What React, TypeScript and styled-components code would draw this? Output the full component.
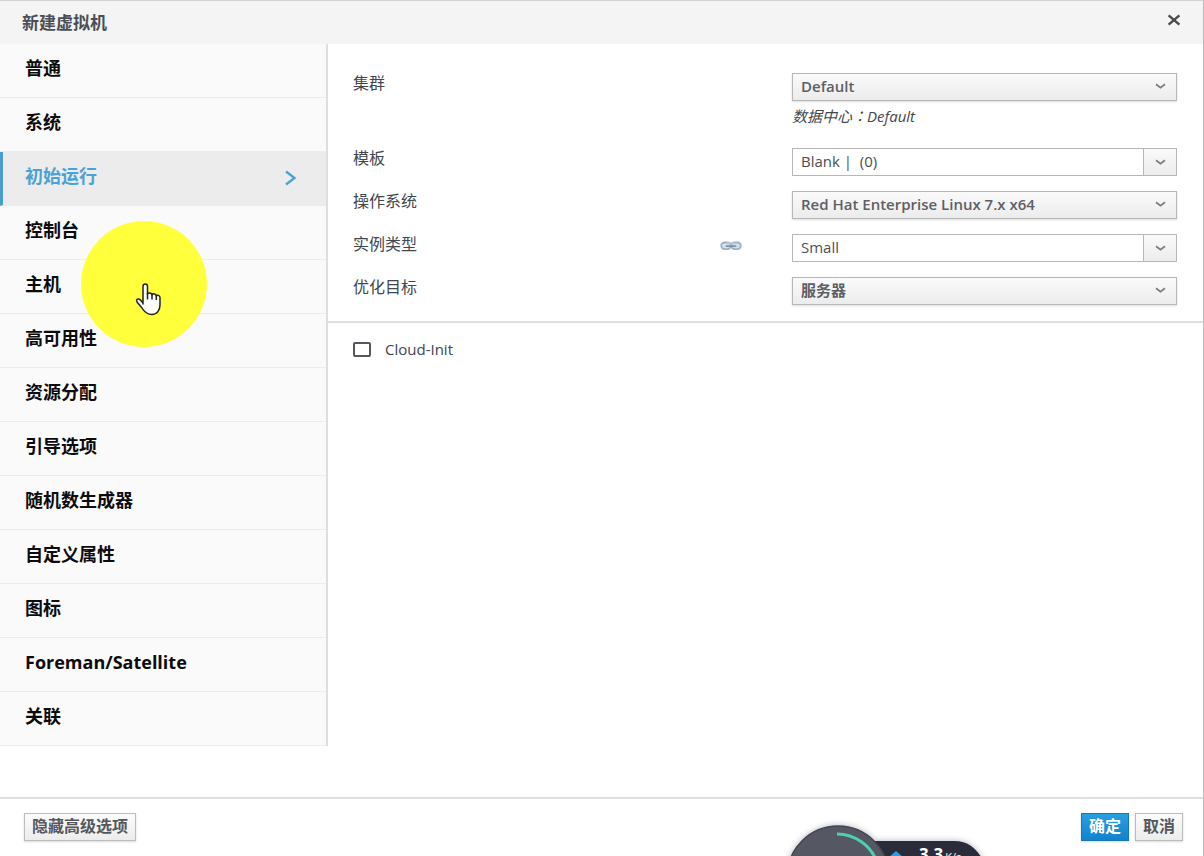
import React, { useState } from "react";
import styled, { createGlobalStyle, css } from "styled-components";

const GlobalStyle = createGlobalStyle`
  *, *::before, *::after { box-sizing: border-box; }
  body {
    margin: 0;
    background: #fff;
    color: #42464d;
    font-family: "Open Sans", "Noto Sans CJK SC", sans-serif;
    font-size: 15px;
  }
  button, select, input { font: inherit; color: inherit; margin: 0; }
`;

const Dialog = styled.main`
  position: relative;
  display: flex;
  flex-direction: column;
  height: 100vh;
  overflow: hidden;
  border-top: 1px solid #d2d2d2;
  border-right: 1px solid #b9b9b9;
`;

const Header = styled.header`
  display: flex;
  align-items: center;
  justify-content: space-between;
  flex: none;
  height: 43px;
  padding: 0 21px 0 22px;
  background: #f4f4f4;
`;

const Title = styled.h1`
  margin: 0;
  font-size: 17px;
  line-height: 24px;
  font-weight: 700;
  color: #4a4e56;
`;

const CloseButton = styled.button`
  display: flex;
  padding: 0;
  margin-bottom: 6px;
  border: 0;
  background: none;
`;

const Body = styled.div`
  display: flex;
  flex: 1;
  min-height: 0;
`;

const Sidebar = styled.nav`
  flex: 0 0 328px;
  align-self: flex-start;
  border-right: 2px solid #dedede;
  background: #fafafa;
`;

const Tab = styled.button<{ $active: boolean }>`
  display: flex;
  align-items: center;
  justify-content: space-between;
  width: 100%;
  height: 54px;
  padding: 0 28px 6px 25px;
  border: 0;
  border-bottom: 1px solid #ececec;
  background: none;
  font-size: 18px;
  line-height: 24px;
  font-weight: 700;
  color: #0c0c0e;
  text-align: left;
  ${(p) =>
    p.$active &&
    css`
      padding-left: 22px;
      border-left: 3px solid #4a9ccb;
      background: #ececec;
      color: #4ba3d3;
    `}
  svg { margin-top: 5px; }
`;

const Content = styled.section`
  flex: 1;
  min-width: 0;
`;

const Fields = styled.div`
  display: flex;
  flex-direction: column;
  gap: 15px;
  padding: 29px 26px 16px 25px;
  border-bottom: 2px solid #e0e0e0;
`;

const Field = styled.div`
  display: grid;
  grid-template-columns: minmax(0, 1fr) 48px 385px;
  align-items: start;
`;

const FieldLabel = styled.label`
  font-size: 16px;
  line-height: 20px;
`;

const LinkSlot = styled.span`
  display: flex;
  margin: 7px 0 0 -24px;
`;

const Control = styled.div`
  position: relative;
  display: flex;
  height: 28px;
`;

const face = css`
  background: linear-gradient(#fafafa, #ececec);
`;

const Select = styled.select`
  appearance: none;
  width: 100%;
  padding: 0 40px 2px 8px;
  border: 1px solid #b7b7b7;
  border-radius: 0;
  box-shadow: 0 1px 2px #dcdcdc;
  ${face}
  font-size: 15px;
  font-weight: 600;
  color: #5c5f65;
`;

const SelectArrow = styled.span`
  position: absolute;
  top: 10px;
  right: 11px;
  display: flex;
  pointer-events: none;
`;

const ComboInput = styled.input`
  flex: 1;
  min-width: 0;
  padding: 0 8px 2px;
  border: 1px solid #b7b7b7;
  font-size: 15px;
  color: #4c4f55;
  white-space: pre;
`;

const ComboButton = styled.button`
  display: flex;
  align-items: center;
  justify-content: center;
  width: 33px;
  padding: 0;
  border: 1px solid #b7b7b7;
  border-left: 0;
  ${face}
`;

const Note = styled.p`
  margin: 5px 0 7px;
  font-size: 15px;
  line-height: 20px;
  font-style: italic;
`;

const Colon = styled.span`
  font-family: "Noto Sans CJK TC", sans-serif;
`;

const CheckLabel = styled.label`
  display: flex;
  align-items: center;
  gap: 14px;
  padding: 16px 25px;
  line-height: 20px;
`;

const Checkbox = styled.input`
  appearance: none;
  width: 18px;
  height: 15px;
  border: 2px solid #55585c;
  border-radius: 2px;
  background: #fff;
  &:checked { background: #55585c; }
`;

const Footer = styled.footer`
  display: flex;
  align-items: flex-start;
  gap: 6px;
  flex: none;
  height: 59px;
  padding: 14px 20px 0 24px;
  border-top: 2px solid #e0e0e0;
`;

const Button = styled.button<{ $primary?: boolean; $first?: boolean }>`
  height: 28px;
  padding: 0 7px 2px;
  border: 1px solid ${(p) => (p.$primary ? "#1777b5" : "#bcbcbc")};
  background: ${(p) => (p.$primary ? "linear-gradient(#27a0e0, #1183cc)" : "linear-gradient(#fcfcfc, #ececec)")};
  box-shadow: 0 1px 2px #d8d8d8;
  color: ${(p) => (p.$primary ? "#fff" : "#54575e")};
  font-size: 16px;
  line-height: 24px;
  font-weight: 700;
  ${(p) => p.$first && css`margin-right: auto;`}
`;

const Pointer = styled.div`
  position: absolute;
  left: 80px;
  top: 219px;
  width: 128px;
  height: 128px;
  pointer-events: none;
`;

const SpeedWidget = styled.div`
  position: absolute;
  left: 778px;
  bottom: 0;
  width: 216px;
  height: 42px;
  overflow: hidden;
`;

const Speed = styled.span`
  position: absolute;
  left: 141px;
  top: 29px;
  font-size: 17px;
  line-height: 24px;
  font-weight: 700;
  color: #fff;
  small { margin-left: 2px; font-size: 11px; font-weight: 400; }
`;

const Chevron = () => (
  <svg width="11" height="7" viewBox="0 0 11 7" fill="none" stroke="#7d7d7d" strokeWidth="1.8" aria-hidden="true">
    <path d="M1 1.2 5.5 4.6 10 1.2" />
  </svg>
);

const ChainIcon = () => (
  <svg width="22" height="10" viewBox="0 0 22 10" fill="none" aria-label="linked">
    <rect x="1.2" y="1.5" width="9.6" height="6.6" rx="3.3" fill="#d4e0ea" stroke="#9fb1c1" strokeWidth="1.8" />
    <rect x="11.2" y="1.5" width="9.6" height="6.6" rx="3.3" fill="#d4e0ea" stroke="#9fb1c1" strokeWidth="1.8" />
    <path d="M7 2.2h8" stroke="#b9c9d8" strokeWidth="2" />
    <path d="M6.5 5.2h9" stroke="#7f93a8" strokeWidth="1.8" strokeLinecap="round" />
  </svg>
);

const tabs = ["普通", "系统", "初始运行", "控制台", "主机", "高可用性", "资源分配", "引导选项", "随机数生成器", "自定义属性", "图标", "Foreman/Satellite", "关联"];

function SelectField({ id, label, value, note }: { id: string; label: string; value: string; note?: React.ReactNode }) {
  return (
    <Field>
      <FieldLabel htmlFor={id}>{label}</FieldLabel>
      <span />
      <div>
        <Control>
          <Select id={id} defaultValue={value}>
            <option>{value}</option>
          </Select>
          <SelectArrow><Chevron /></SelectArrow>
        </Control>
        {note && <Note>{note}</Note>}
      </div>
    </Field>
  );
}

function ComboField({ id, label, value, linked }: { id: string; label: string; value: string; linked?: boolean }) {
  return (
    <Field>
      <FieldLabel htmlFor={id}>{label}</FieldLabel>
      <LinkSlot>{linked && <ChainIcon />}</LinkSlot>
      <Control>
        <ComboInput id={id} defaultValue={value} />
        <ComboButton aria-label={label}><Chevron /></ComboButton>
      </Control>
    </Field>
  );
}

export default function App() {
  const [active, setActive] = useState("初始运行");
  return (
    <>
      <GlobalStyle />
      <Dialog>
        <Header>
          <Title>新建虚拟机</Title>
          <CloseButton aria-label="关闭">
            <svg width="16" height="14" viewBox="0 0 16 14" stroke="#4a4a4a" strokeWidth="2.4">
              <path d="M2.600 2.400 13.400 11.600M13.400 2.400 2.600 11.600" />
            </svg>
          </CloseButton>
        </Header>
        <Body>
          <Sidebar>
            {tabs.map((t) => (
              <Tab key={t} $active={t === active} onClick={() => setActive(t)}>
                {t}
                {t === active && (
                  <svg width="14" height="16" viewBox="0 0 14 16" fill="none" stroke="#4ba3d3" strokeWidth="2.4">
                    <path d="M2 1.5 10.500 8 2 14.5" />
                  </svg>
                )}
              </Tab>
            ))}
          </Sidebar>
          <Content>
            <Fields>
              <SelectField id="cluster" label="集群" value="Default" note={<>数据中心<Colon>：</Colon>Default</>} />
              <ComboField id="template" label="模板" value="Blank |  (0)" />
              <SelectField id="os" label="操作系统" value="Red Hat Enterprise Linux 7.x x64" />
              <ComboField id="instance" label="实例类型" value="Small" linked />
              <SelectField id="optimize" label="优化目标" value="服务器" />
            </Fields>
            <CheckLabel>
              <Checkbox type="checkbox" />
              Cloud-Init
            </CheckLabel>
          </Content>
        </Body>
        <Footer>
          <Button $first>隐藏高级选项</Button>
          <Button $primary>确定</Button>
          <Button>取消</Button>
        </Footer>
        <Pointer>
          <svg width="128" height="128" viewBox="0 0 128 128" aria-hidden="true">
            <circle cx="64" cy="64" r="63" fill="#ffff3c" />
            <g transform="translate(54 63)">
              <path
                d="M9 21V3.5C9 .2 13.5.2 13.5 3.500V11c.8-1.600 4.200-1.200 4.500.8.800-1.500 4-1.200 4.300 1 1-1.200 3.700-.6 3.700 2V22c0 5-3 9.500-8 9.500-5.500 0-8-3-10-6.500L3 19c-1.500-3 1.500-4 3.500-2L9 20z"
                fill="#fff" stroke="#222" strokeWidth="1.500" strokeLinejoin="round"
              />
              <path d="M13.500 10v6.500M18 11.500v5M22.300 12.500v4.500" stroke="#222" strokeWidth="1.500" fill="none" />
            </g>
          </svg>
        </Pointer>
        <SpeedWidget>
          <svg width="216" height="42" viewBox="0 0 216 42" aria-hidden="true">
            <g style={{ filter: "drop-shadow(0 0 3px #b4b4c0)" }}>
              <path d="M70 27H176C190 27 198 34 205 46H70Z" fill="#2b2c39" />
              <circle cx="60" cy="63" r="51" fill="#555763" stroke="#44464f" strokeWidth="1.500" />
            </g>
            <path d="M59 20A43 43 0 0 1 99 48" fill="none" stroke="#4fcfb0" strokeWidth="3" />
            <path d="M111 43 118 37 125 43Z" fill="#2f9be0" />
          </svg>
          <Speed>3.3<small>K/s</small></Speed>
        </SpeedWidget>
      </Dialog>
    </>
  );
}
